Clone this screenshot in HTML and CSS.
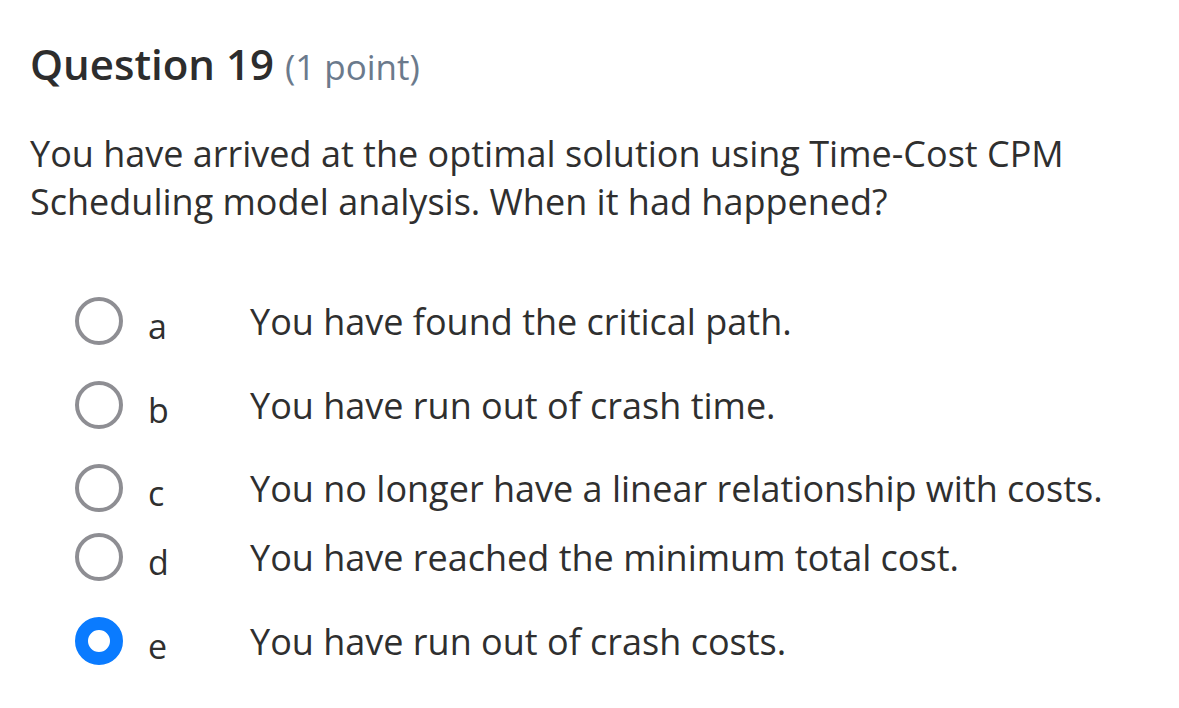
FILE: index.html
```html
<!DOCTYPE html>
<html>
<head>
<meta charset="utf-8">
<link rel="stylesheet" href="styles.css">
</head>
<body>
<div class="question">
  <h2 class="q-title">Question 19 <span class="q-points">(1 point)</span></h2>
  <p class="q-text">You have arrived at the optimal solution using Time-Cost CPM Scheduling model analysis. When it had happened?</p>
  <div class="options">
    <div class="option row-a">
      <span class="radio"></span><span class="letter">a</span><span class="answer">You have found the critical path.</span>
    </div>
    <div class="option row-b">
      <span class="radio"></span><span class="letter">b</span><span class="answer">You have run out of crash time.</span>
    </div>
    <div class="option row-c">
      <span class="radio"></span><span class="letter">c</span><span class="answer">You no longer have a linear relationship with costs.</span>
    </div>
    <div class="option row-d">
      <span class="radio"></span><span class="letter">d</span><span class="answer">You have reached the minimum total cost.</span>
    </div>
    <div class="option row-e">
      <span class="radio checked"></span><span class="letter">e</span><span class="answer">You have run out of crash costs.</span>
    </div>
  </div>
</div>
</body>
</html>
```
FILE: styles.css
```css
html, body {
  margin: 0;
  padding: 0;
  background: #ffffff;
}
body {
  font-family: "Open Sans", "Noto Sans", sans-serif;
  color: #2f2f2f;
}
.question {
  padding: 36px 30px 0 30px;
}
.q-title {
  margin: 0;
  font-size: 42px;
  font-weight: 600;
  line-height: 56px;
  color: #2d2d2d;
}
.q-points {
  font-size: 35px;
  font-weight: 400;
  color: #6b7a8c;
}
.q-text {
  margin: 35px 0 0 0;
  font-size: 36px;
  line-height: 48px;
  max-width: 1100px;
}
.options {
  margin-top: 71px;
  display: flex;
  flex-direction: column;
}
.option {
  display: flex;
  align-items: center;
  height: 48px;
  padding-left: 45px;
}
.row-b { margin-top: 36px; }
.row-c { margin-top: 35px; }
.row-d { margin-top: 21px; }
.row-e { margin-top: 36px; }
.radio {
  box-sizing: border-box;
  width: 48px;
  height: 48px;
  border: 4px solid #8e8e93;
  border-radius: 50%;
  flex: none;
}
.radio.checked {
  border: 13px solid #0a7bff;
  background: #ffffff;
}
.letter {
  width: 127px;
  padding-left: 25px;
  box-sizing: border-box;
  font-size: 34px;
  margin-top: 10px;
  flex: none;
}
.answer {
  font-size: 36px;
}
```
